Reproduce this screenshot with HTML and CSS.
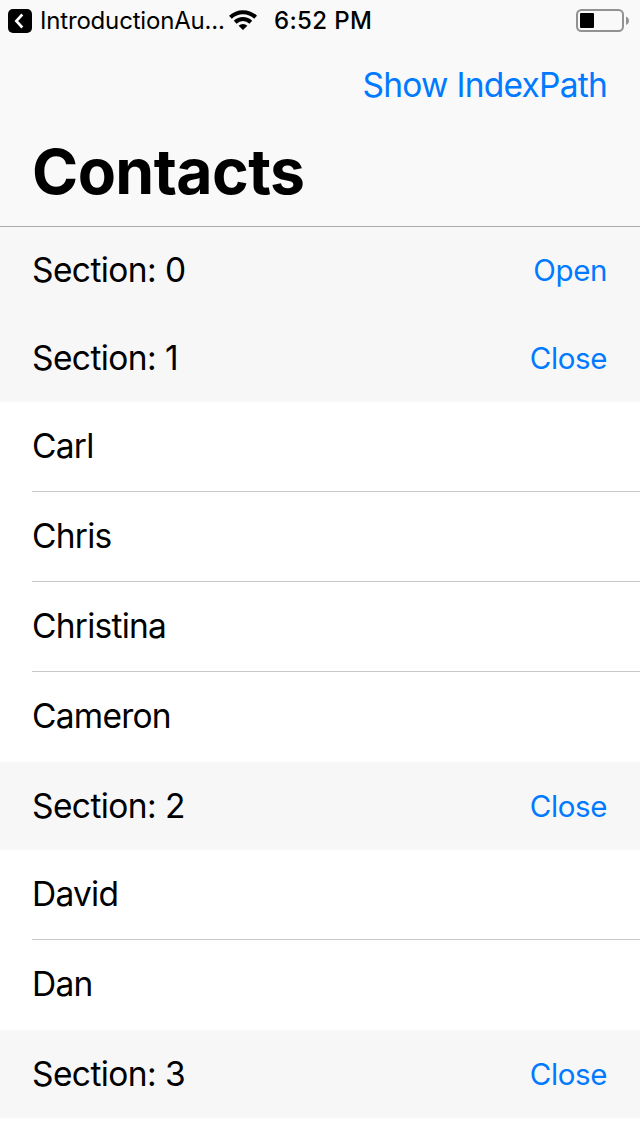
FILE: index.html
```html
<!DOCTYPE html>
<html lang="en">
<head>
<meta charset="utf-8">
<title>Contacts</title>
<link rel="stylesheet" href="styles.css">
</head>
<body>
<header class="navbar">
  <div class="status">
    <svg class="back-icon" width="24" height="24" viewBox="0 0 24 24"><rect width="24" height="24" rx="5"/><path d="M14.3 5.5 8.3 12l6 6.500" fill="none" stroke="#fff" stroke-width="2.6"/></svg>
    <span class="back-app">IntroductionAu...</span>
    <svg class="wifi" width="28" height="20" viewBox="0 0 28 20"><g fill="none" stroke="#000" stroke-width="4"><path d="M1.400 7.200a18.200 18.200 0 0 1 25.200 0"/><path d="M6.200 12.200a11.300 11.300 0 0 1 15.600 0"/></g><path d="M14 20l-4.400-4.200a6.300 6.300 0 0 1 8.800 0z"/></svg>
    <time class="clock">6:52 PM</time>
    <svg class="battery" width="54" height="24" viewBox="0 0 54 24"><rect x="1" y="1" width="46" height="21" rx="4.500" fill="none" stroke="#929292" stroke-width="2"/><rect x="4" y="4" width="14" height="15" rx="1"/><path d="M50 7.500c4 1.500 4 7 0 8.500z" fill="#929292"/></svg>
  </div>
  <div class="actions"><a class="link index-link">Show IndexPath</a></div>
  <h1 class="title">Contacts</h1>
</header>
<main>
  <section class="group">
    <div class="section-head"><span>Section: 0</span><a class="link toggle">Open</a></div>
  </section>
  <section class="group">
    <div class="section-head"><span>Section: 1</span><a class="link toggle">Close</a></div>
    <ul class="rows"><li class="row">Carl</li><li class="row">Chris</li><li class="row">Christina</li><li class="row">Cameron</li></ul>
  </section>
  <section class="group">
    <div class="section-head"><span>Section: 2</span><a class="link toggle">Close</a></div>
    <ul class="rows"><li class="row">David</li><li class="row">Dan</li></ul>
  </section>
  <section class="group">
    <div class="section-head"><span>Section: 3</span><a class="link toggle">Close</a></div>
  </section>
</main>
</body>
</html>
```
FILE: styles.css
```css
* { box-sizing: border-box; }
body { margin: 0; background: #fff; color: #000; font-family: Inter, "Liberation Sans", sans-serif; font-size: 33.5px; line-height: 40px; letter-spacing: -0.58px; overflow: hidden; height: 1136px; }
.navbar { height: 227px; background: #f9f9f9; border-bottom: 1px solid #acacac; }
.status { height: 40px; display: flex; align-items: center; padding: 2px 10px 0 8px; font-size: 24px; letter-spacing: -0.18px; white-space: nowrap; }
.back-app { width: 189px; margin-left: 8px; }
.wifi { margin-bottom: 2px; }
.clock { margin-left: 17px; font-weight: 550; letter-spacing: 0.35px; }
.battery { margin-left: auto; }
.actions { height: 88px; display: flex; align-items: center; justify-content: flex-end; padding: 1px 33px 0 0; }
.index-link { letter-spacing: -0.75px; }
.link { color: #007aff; }
.title { margin: 0; padding: 3px 32px 0; font-size: 62.5px; line-height: 80px; font-weight: 700; letter-spacing: -0.6px; }
.section-head { height: 88px; display: flex; align-items: center; justify-content: space-between; padding: 0 32px; background: #f7f7f7; }
.group:first-child .section-head { height: 87px; padding-bottom: 1px; }
.toggle { font-size: 29.5px; letter-spacing: -0.4px; padding-right: 1px; }
.rows { margin: 0; padding: 0; list-style: none; }
.row { height: 90px; margin-left: 32px; line-height: 88px; letter-spacing: -0.75px; border-bottom: 1px solid #c8c7cc; }
.row:last-child { border-bottom: 0; }
```
